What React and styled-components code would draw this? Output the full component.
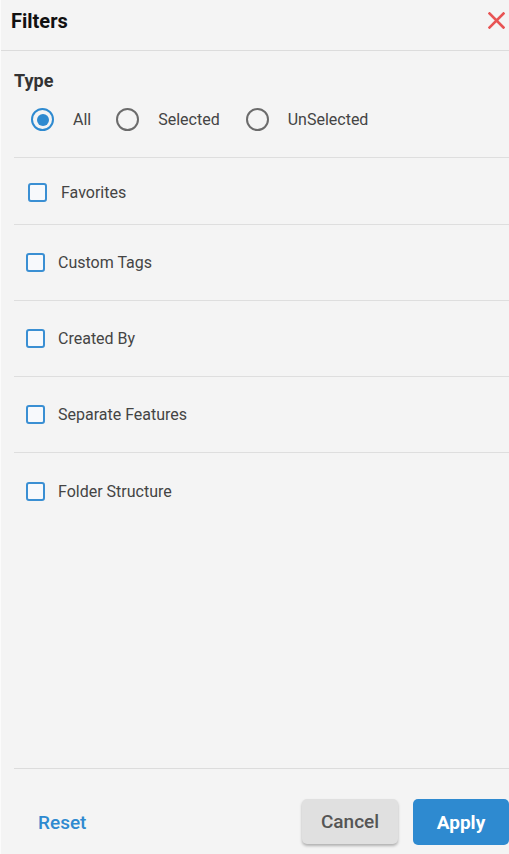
import React, { useState } from "react";
import styled, { createGlobalStyle } from "styled-components";

const Global = createGlobalStyle`
  html, body { margin: 0; padding: 0; background: #f4f4f4; }
  body { font-family: Roboto, "Noto Sans", Arial, sans-serif; }
  * { box-sizing: border-box; }
`;

const Panel = styled.div`
  width: 509px;
  height: 854px;
  display: flex;
  flex-direction: column;
  background: #f4f4f4;
  border-left: 1px solid #fbfbfb;
  overflow: hidden;
`;

const Header = styled.div`
  height: 51px;
  flex: none;
  display: flex;
  align-items: flex-start;
  justify-content: space-between;
  padding: 9px 4px 0 10px;
  border-bottom: 1px solid #dcdcdc;
`;

const Title = styled.h1`
  margin: 0;
  font-size: 20px;
  line-height: 24px;
  font-weight: 700;
  color: #111;
`;

const CloseButton = styled.button`
  border: none;
  background: none;
  padding: 0;
  margin-top: 3px;
  width: 17px;
  height: 17px;
  cursor: pointer;
  display: flex;
`;

const Body = styled.div`
  flex: 1;
  display: flex;
  flex-direction: column;
  padding-left: 13px;
`;

const SectionLabel = styled.div`
  margin-top: 20px;
  font-size: 18px;
  line-height: 20px;
  font-weight: 700;
  color: #333;
`;

const RadioGroup = styled.div`
  display: flex;
  align-items: center;
  padding: 17px 0 26px 17px;
  border-bottom: 1px solid #dedede;
`;

const RadioOption = styled.label`
  display: flex;
  align-items: center;
  gap: 19px;
  margin-right: ${(p) => p.$mr}px;
  font-size: 16px;
  line-height: 23px;
  color: #444;
  cursor: pointer;
`;

const RadioCircle = styled.span`
  width: 23px;
  height: 23px;
  border-radius: 50%;
  border: 2.5px solid ${(p) => (p.$checked ? "#2e8ad0" : "#6b6b6b")};
  display: flex;
  align-items: center;
  justify-content: center;
  &::after {
    content: "";
    width: 12px;
    height: 12px;
    border-radius: 50%;
    background: ${(p) => (p.$checked ? "#2e8ad0" : "transparent")};
  }
`;

const CheckRow = styled.label`
  height: ${(p) => p.$h}px;
  flex: none;
  display: flex;
  align-items: center;
  padding-left: ${(p) => p.$pl}px;
  padding-top: ${(p) => p.$pt || 0}px;
  gap: ${(p) => p.$gap}px;
  border-bottom: ${(p) => (p.$last ? "none" : "1px solid #dedede")};
  font-size: 16px;
  color: #444;
  cursor: pointer;
`;

const CheckBox = styled.span`
  width: 19px;
  height: 19px;
  border: 2px solid #3a8fd3;
  border-radius: 3px;
  background: #f7f9fc;
  flex: none;
`;

const Spacer = styled.div`
  flex: 1;
`;

const Footer = styled.div`
  height: 86px;
  flex: none;
  display: flex;
  align-items: flex-start;
  padding: 30px 0 0 24px;
  border-top: 1px solid #dcdcdc;
`;

const ResetButton = styled.button`
  border: none;
  background: none;
  padding: 0;
  height: 46px;
  font-family: inherit;
  font-size: 19px;
  font-weight: 500;
  color: #2e8ad0;
  cursor: pointer;
`;

const ButtonGroup = styled.div`
  margin-left: auto;
  display: flex;
  gap: 15px;
`;

const ActionButton = styled.button`
  width: 96px;
  height: ${(p) => (p.$primary ? 46 : 45)}px;
  border: none;
  border-radius: 5px;
  font-family: inherit;
  font-size: 19px;
  font-weight: ${(p) => (p.$primary ? 700 : 500)};
  color: ${(p) => (p.$primary ? "#fff" : "#555")};
  background: ${(p) => (p.$primary ? "#2e8ad0" : "#e0e0e0")};
  box-shadow: ${(p) =>
    p.$primary ? "none" : "0 2px 3px rgba(0,0,0,0.28)"};
  cursor: pointer;
`;

const options = [
  { label: "All", mr: 25 },
  { label: "Selected", mr: 26 },
  { label: "UnSelected", mr: 0 },
];

const rows = [
  { label: "Favorites", h: 67, pl: 14, gap: 14, pt: 2 },
  { label: "Custom Tags", h: 76, pl: 12, gap: 13 },
  { label: "Created By", h: 76, pl: 12, gap: 13 },
  { label: "Separate Features", h: 76, pl: 12, gap: 13 },
  { label: "Folder Structure", h: 76, pl: 12, gap: 13, last: true },
];

export default function App() {
  const [type, setType] = useState("All");
  return (
    <>
      <Global />
      <Panel>
        <Header>
          <Title>Filters</Title>
          <CloseButton aria-label="Close">
            <svg width="17" height="17" viewBox="0 0 17 17">
              <path
                d="M1.5 1.5 L15.5 15.5 M15.5 1.5 L1.5 15.5"
                stroke="#e85454"
                strokeWidth="2.6"
                strokeLinecap="square"
              />
            </svg>
          </CloseButton>
        </Header>
        <Body>
          <SectionLabel>Type</SectionLabel>
          <RadioGroup>
            {options.map((o) => (
              <RadioOption
                key={o.label}
                $mr={o.mr}
                onClick={() => setType(o.label)}
              >
                <RadioCircle $checked={type === o.label} />
                {o.label}
              </RadioOption>
            ))}
          </RadioGroup>
          {rows.map((r) => (
            <CheckRow
              key={r.label}
              $h={r.h}
              $pl={r.pl}
              $pt={r.pt}
              $gap={r.gap}
              $last={r.last}
            >
              <CheckBox />
              {r.label}
            </CheckRow>
          ))}
          <Spacer />
          <Footer>
            <ResetButton>Reset</ResetButton>
            <ButtonGroup>
              <ActionButton>Cancel</ActionButton>
              <ActionButton $primary>Apply</ActionButton>
            </ButtonGroup>
          </Footer>
        </Body>
      </Panel>
    </>
  );
}
